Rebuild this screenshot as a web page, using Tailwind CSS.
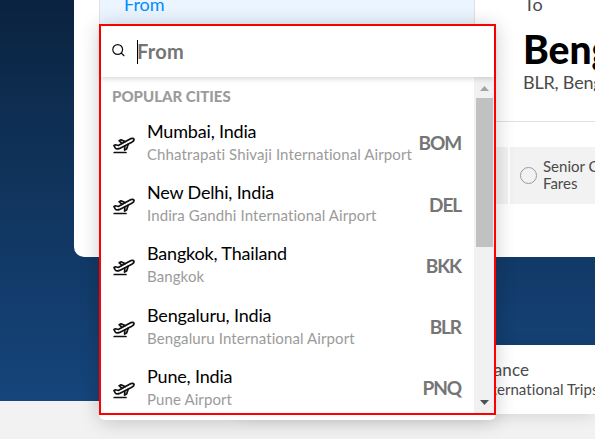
<!DOCTYPE html>
<html lang="en">
<head>
<meta charset="utf-8">
<title>Flight search</title>
<script src="https://cdn.jsdelivr.net/npm/@tailwindcss/browser@4"></script>
</head>
<body class="relative h-[439px] w-[595px] overflow-hidden bg-[#f2f2f2] font-['Lato',sans-serif] text-[#4a4a4a]">
<svg class="hidden">
  <symbol id="plane" viewBox="0 0 22 18">
    <g fill="none" stroke="currentColor" stroke-width="1.7" stroke-linejoin="round" stroke-linecap="round">
      <path d="M1 9.6 2.5 8.8 5.3 9.5 16.6 3.2C18.4 2.2 20.4 2 20.9 3.1 21.4 4.3 20.3 5.4 18.8 6.2L6.6 12.4C4.6 13.3 3 12.9 2.1 11.700Z"/>
      <path d="M12 5.6 8 3.8 6.1 4.7 9 7.3M15.2 8.2 13.6 13 11.6 14 11.8 10"/>
      <path d="M1.2 16.5H13"/>
    </g>
  </symbol>
</svg>
<main class="flex h-[401px] flex-col overflow-hidden bg-linear-to-b from-[#0a223f] from-0% via-[#0e2d50] via-25% to-[#15457c] to-100%">
  <section class="ml-[74px] h-[257px] shrink-0 rounded-bl-[10px] bg-white pl-[25px]">
    <div class="flex h-[122px] border-b border-[#e0e0e0]">
      <div class="w-[376px] shrink-0 border-x border-[#e0e0e0] bg-[#eaf5ff] pl-6 text-[18px] leading-[22px] text-[#008cff]"><p class="-mt-[7px]">From</p></div>
      <div class="whitespace-nowrap pl-[48px]">
        <p class="-mt-[7px] pl-px text-[18px] leading-[22px]">To</p>
        <p class="mt-[11px] text-[39px] font-black leading-[46px] text-black">Bengaluru</p>
        <p class="-mt-px text-[18px] leading-[22px] tracking-[-0.2px]">BLR, Bengaluru International</p>
      </div>
    </div>
    <div class="mt-[25px] flex h-[57px] gap-[2px]">
      <div class="w-[409px] shrink-0 bg-[#f2f2f2]"></div>
      <div class="flex flex-1 items-center gap-[6px] bg-[#f2f2f2] pl-[10px]">
        <span class="size-[17px] shrink-0 rounded-full border border-[#9b9b9b]"></span>
        <p class="-mt-[2px] whitespace-nowrap text-[15px] leading-[17px]">Senior Citizen<br>Fares</p>
      </div>
    </div>
  </section>
</main>
<section class="relative ml-[240px] -mt-[56px] h-[69px] whitespace-nowrap bg-white pl-[214px] pt-[14px] shadow-[0_2px_16px_rgba(0,0,0,0.12)]">
  <p class="pl-[2px] text-[17px] leading-[21px] tracking-[0.15px]">Insurance</p>
  <p class="-mt-px pl-[25px] text-[15px] leading-[20px] tracking-[0.07px]">International Trips</p>
</section>
<div class="absolute left-[99px] top-6 h-[396px] w-[397px] rounded-b-[6px] bg-white shadow-[0_2px_20px_rgba(0,0,0,0.2)]">
  <div class="flex h-[391px] flex-col border-2 border-[#ff0000]">
    <div class="relative z-10 flex h-[51px] shrink-0 items-center bg-white pl-[11px] shadow-[0_2px_5px_rgba(0,0,0,0.15)]">
      <svg class="mb-[3px] size-[13px]" viewBox="0 0 13 13" fill="none" stroke="#111" stroke-width="1.2"><circle cx="5.7" cy="5.5" r="4.9"/><path d="m9.2 9 3.1 3"/></svg>
      <span class="ml-3 h-6 w-px bg-black"></span>
      <span class="-ml-px -mt-[2px] text-[20px] font-bold leading-6 tracking-[0.25px] text-[#757575]">From</span>
    </div>
    <div class="flex min-h-0 flex-1">
      <div class="flex-1 overflow-hidden pl-[11px] pr-[12px]">
        <h2 class="mt-[11px] h-[17px] text-[15px] font-black leading-[17px] text-[#9b9b9b]">POPULAR CITIES</h2>
        <ul id="cities" class="mt-[8px]"></ul>
      </div>
      <div class="flex w-5 flex-col items-center bg-[#f1f1f1] pb-[8px] pt-[9px]">
        <svg class="h-[5px] w-[9px] shrink-0" viewBox="0 0 9 5"><path fill="#a3a3a3" d="M4.5 0 9 5H0z"/></svg>
        <div class="mt-[7px] h-[149px] w-[17px] bg-[#c1c1c1]"></div>
        <svg class="mt-auto h-[5px] w-[9px] shrink-0" viewBox="0 0 9 5"><path fill="#505050" d="M0 0h9L4.500 5z"/></svg>
      </div>
    </div>
  </div>
</div>
<template id="row">
  <li class="flex h-[61.2px]">
    <svg class="ml-[1px] mt-[23px] h-[18px] w-[22px] shrink-0 text-[#111]"><use href="#plane"/></svg>
    <div class="ml-[12px] flex-1 whitespace-nowrap pt-[7px]">
      <p class="text-[18px] leading-[23px] tracking-[-0.18px] text-black"></p>
      <p class="text-[15px] leading-[22px] tracking-[0.1px] text-[#9b9b9b]"></p>
    </div>
    <b class="mt-[18.4px] pr-px text-[19px] font-bold leading-6 tracking-[-1.1px] text-[#757575]"></b>
  </li>
</template>
<script>
[["Mumbai, India","Chhatrapati Shivaji International Airport","BOM"],
 ["New Delhi, India","Indira Gandhi International Airport","DEL"],
 ["Bangkok, Thailand","Bangkok","BKK"],
 ["Bengaluru, India","Bengaluru International Airport","BLR"],
 ["Pune, India","Pune Airport","PNQ"]].forEach(r => {
  const n = document.getElementById("row").content.cloneNode(true);
  n.querySelectorAll("p, b").forEach((e, i) => e.textContent = r[i]);
  document.getElementById("cities").append(n);
});
</script>
</body>
</html>
